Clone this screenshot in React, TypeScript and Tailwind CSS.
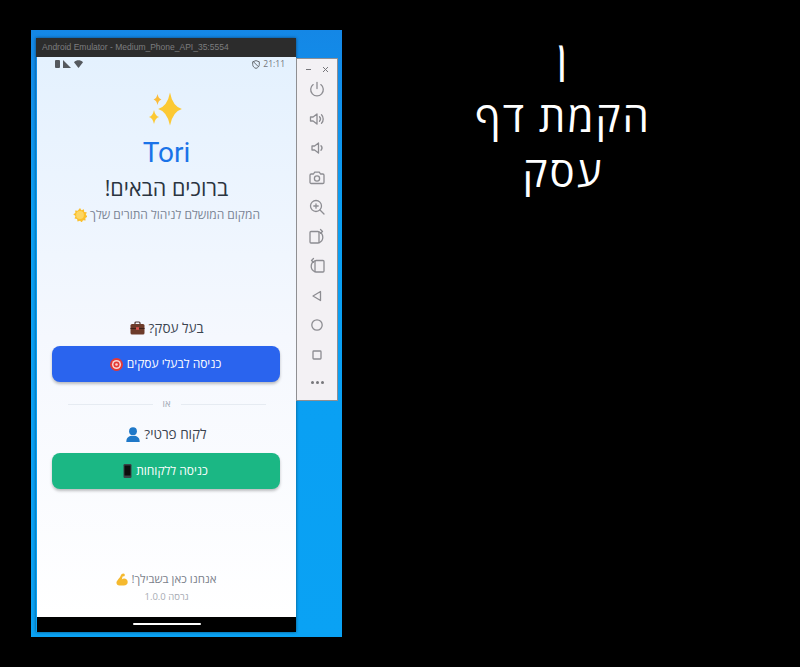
import React from "react";

const F = "font-['Open_Sans','Noto_Sans','Liberation_Sans',sans-serif]";

function Sparkles() {
  const s = (cx: number, cy: number, r: number) =>
    `M${cx} ${cy - r}Q${cx + r * 0.16} ${cy - r * 0.16} ${cx + r * 0.72} ${cy}Q${cx + r * 0.16} ${cy + r * 0.16} ${cx} ${cy + r}Q${cx - r * 0.16} ${cy + r * 0.16} ${cx - r * 0.72} ${cy}Q${cx - r * 0.16} ${cy - r * 0.16} ${cx} ${cy - r}Z`;
  return (
    <svg width="36" height="34" viewBox="0 0 36 34" className="-ml-[3px]">
      <path d={s(23, 17, 16.5)} fill="#fcc934" />
      <path d={s(10.5, 7.5, 5.5)} fill="#fbbc3a" />
      <path d={s(7, 25, 7)} fill="#fcc934" />
    </svg>
  );
}

function Sun() {
  return (
    <svg width="14" height="14" viewBox="0 0 13 13">
      <path d="M6.500 0l1.400 2 2.300-.8.2 2.400 2.400.4-.9 2.300 1.600 1.700-2 1.200.2 2.400-2.400-.2-1.200 2-1.600-1.600-2.300.8-.4-2.400-2.400-.5.9-2.200L.2 5.900l2-1.200-.2-2.400 2.400.2z" fill="#fbc02d" />
      <circle cx="6.500" cy="6.500" r="3.600" fill="#fdd663" />
    </svg>
  );
}

function Briefcase() {
  return (
    <svg width="15" height="14" viewBox="0 0 15 14">
      <rect x="5" y="1" width="5" height="3" rx="1" fill="none" stroke="#4e342e" strokeWidth="1.2" />
      <rect x="0.5" y="3" width="14" height="10.5" rx="1.5" fill="#6d3b2a" />
      <rect x="0.5" y="7" width="14" height="1" fill="#3e2018" />
      <rect x="6" y="6.2" width="3" height="2.6" fill="#d9534f" />
    </svg>
  );
}

function Target() {
  return (
    <svg width="13" height="13" viewBox="0 0 12 12">
      <circle cx="6" cy="6" r="6" fill="#e53935" />
      <circle cx="6" cy="6" r="4.2" fill="#f8d7d5" />
      <circle cx="6" cy="6" r="2.8" fill="#e53935" />
      <circle cx="6" cy="6" r="1.2" fill="#f8d7d5" />
    </svg>
  );
}

function Bust() {
  return (
    <svg width="14" height="15" viewBox="0 0 14 15">
      <circle cx="7" cy="4.2" r="3.9" fill="#1f78c8" />
      <path d="M0.300 15c0-4.500 2.600-6.200 6.700-6.200s6.700 1.700 6.700 6.200z" fill="#1f78c8" />
    </svg>
  );
}

function Mobile() {
  return (
    <svg width="9" height="14" viewBox="0 0 9 14">
      <rect x="0.5" y="0" width="8" height="14" rx="1.2" fill="#3a4347" />
      <rect x="1.5" y="1.5" width="6" height="10" fill="#0d0d0d" />
    </svg>
  );
}

function Muscle() {
  return (
    <svg width="12" height="13" viewBox="0 0 12 13">
      <path d="M7.500 0.500C5.800 0.800 5 1.600 4.600 3 3.700 4.800 1.600 7 .7 8.600c-.8 2 .4 3.900 2.800 3.900h4.200c2.600 0 4-1.500 4-3.500 0-2.200-1.600-3.600-3.500-3.600-1 0-1.800.4-2.400 1l.8-3 1.700-.2c.7-.2.9-2.400-.8-2.700z" fill="#f5b92e" />
    </svg>
  );
}

function ToolIcon({ children }: { children: React.ReactNode }) {
  return (
    <svg width="18" height="18" viewBox="0 0 18 18" fill="none" stroke="#8d8d92" strokeWidth="1.3" strokeLinecap="round" strokeLinejoin="round">
      {children}
    </svg>
  );
}

const tools: React.ReactNode[] = [
  <><path d="M9 2.500v6" /><path d="M5.200 4.600a6.300 6.300 0 1 0 7.600 0" /></>,
  <><path d="M2.500 7v4h2.600L9 14V4L5.100 7z" /><path d="M11.500 6.800a3.200 3.200 0 0 1 0 4.400" /><path d="M13.500 4.800a6 6 0 0 1 0 8.400" /></>,
  <><path d="M4 7v4h2.600L10.500 14V4L6.600 7z" /><path d="M13 6.800a3.200 3.200 0 0 1 0 4.400" /></>,
  <><path d="M2 6.200c0-.7.500-1.200 1.200-1.200h2.300l1.200-1.800h4.600L12.500 5h2.300c.7 0 1.200.5 1.200 1.200v7.100c0 .7-.5 1.200-1.200 1.200H3.200C2.500 14.500 2 14 2 13.300z" /><circle cx="9" cy="9.500" r="2.600" /></>,
  <><circle cx="8" cy="8" r="5.500" /><path d="M12 12l4 4M8 5.800v4.400M5.800 8h4.400" /></>,
  <><rect x="2" y="3.500" width="9" height="11.500" rx="1" /><path d="M11 3.800c2.200.7 3.800 2.800 3.800 5.500 0 2.700-1.500 4.600-3.800 5.500M12.500 1.500l2 2-2 1.800" /></>,
  <><rect x="7" y="3.500" width="9" height="11.500" rx="1" /><path d="M7 3.800C4.800 4.500 3.200 6.600 3.200 9.300c0 2.700 1.500 4.600 3.800 5.500M5.500 1.500l-2 2 2 1.800" /></>,
  <path d="M12.500 4.500v9L5 9z" />,
  <circle cx="9" cy="9" r="5.200" />,
  <rect x="5" y="5" width="8" height="8" rx="0.800" />,
];

export default function App() {
  return (
    <div className={`${F} relative w-[800px] h-[667px] overflow-hidden bg-black`}>
      {/* Desktop wallpaper */}
      <div className="absolute left-[31px] top-[30px] w-[311px] h-[607px] bg-gradient-to-b from-[#1487e6] via-[#0a9ef2] via-30% to-[#0aa2f4]">
        {/* Emulator window */}
        <div className="absolute left-[5px] top-[8px] w-[260px] h-[594px] flex flex-col shadow-[0_0_3px_rgba(0,0,0,0.5)]">
          <div className="h-[19px] shrink-0 bg-[#2c2c2c] flex items-center pl-[6px] text-[8.500px] font-['Liberation_Sans',sans-serif] text-[#7c7d7f]">
            Android Emulator - Medium_Phone_API_35:5554
          </div>
          <div className="h-[560px] shrink-0 ml-[1px] bg-gradient-to-b from-[#e4f1fe] via-[#f5f8fe] via-50% to-white flex flex-col items-center relative">
            <div className="h-[14px] w-full shrink-0 flex items-center justify-between pl-[18px] pr-[11px] text-[8.500px] text-[#72767b]">
              <div className="flex items-center gap-[3px]">
                <div className="w-[5px] h-[8px] bg-[#55595e] rounded-[1px]" />
                <svg width="8" height="8" viewBox="0 0 8 8"><path d="M0 8V0l8 8z" fill="#55595e" /></svg>
                <svg width="9" height="8" viewBox="0 0 9 8"><path d="M0 2.200C2.600-.4 6.400-.4 9 2.200L4.500 8z" fill="#55595e" /></svg>
              </div>
              <div className="flex items-center gap-[3px]">
                <svg width="8" height="9" viewBox="0 0 8 9" fill="none" stroke="#666a6f" strokeWidth="1"><path d="M4 .6l3.300 1.200v2.600c0 2-1.300 3.300-3.300 4-2-.7-3.300-2-3.300-4V1.800zM1.500 1.800l5 5" /></svg>
                <span>21:11</span>
              </div>
            </div>
            <div className="mt-[21px] h-[34px] flex items-center justify-center"><Sparkles /></div>
            <div className="mt-[10px] text-[28px] leading-[34px] text-[#1a73e8] font-['Roboto',sans-serif]">Tori</div>
            <div dir="rtl" className="mt-[3px] text-[21.500px] leading-[30px] text-[#2b3440]">ברוכים הבאים!</div>
            <div dir="rtl" className="mt-[2px] text-[12px] leading-[20px] text-[#7a8494] flex items-center gap-[3px]">
              <span>המקום המושלם לניהול התורים שלך</span><Sun />
            </div>

            <div dir="rtl" className="mt-[93px] text-[13.500px] leading-[20px] text-[#3b4450] flex items-center gap-[4px]">
              <span>בעל עסק?</span><Briefcase />
            </div>
            <button dir="rtl" className="mt-[8px] w-[228px] h-[36px] -translate-x-px rounded-[8px] bg-[#2a64ee] text-white text-[12px] flex items-center justify-center gap-[4px] shadow-[0_2px_3px_rgba(0,0,0,0.25)]">
              <span>כניסה לבעלי עסקים</span><Target />
            </button>
            <div dir="rtl" className="mt-[16px] w-[198px] flex items-center gap-[10px] text-[9.500px] leading-[12px] text-[#a0a7b3]">
              <div className="flex-1 h-px bg-[#e6ebf2]" />
              <span>או</span>
              <div className="flex-1 h-px bg-[#e6ebf2]" />
            </div>
            <div dir="rtl" className="mt-[14px] text-[13.500px] leading-[20px] text-[#3b4450] flex items-center gap-[4px]">
              <span>לקוח פרטי?</span><Bust />
            </div>
            <button dir="rtl" className="mt-[9px] w-[228px] h-[36px] -translate-x-px rounded-[8px] bg-[#1bb784] text-white text-[12px] flex items-center justify-center gap-[4px] shadow-[0_2px_3px_rgba(0,0,0,0.25)]">
              <span>כניסה ללקוחות</span><Mobile />
            </button>

            <div dir="rtl" className="mt-[81px] text-[11.500px] leading-[18px] text-[#7a808a] flex items-center gap-[3px]">
              <span>אנחנו כאן בשבילך!</span><Muscle />
            </div>
            <div dir="rtl" className="mt-[2px] text-[9.500px] leading-[14px] text-[#a7abb3]">גרסה 1.0.0</div>
          </div>
          <div className="flex-1 bg-black flex items-center justify-center ml-[1px] pb-[1px]">
            <div className="w-[68px] h-[2px] rounded-full bg-white" />
          </div>
        </div>

        {/* Emulator side toolbar */}
        <div className="absolute left-[265px] top-[28px] w-[42px] h-[343px] bg-[#f3f1f4] border border-[#8f8f92] flex flex-col items-center">
          <div className="w-full h-[20px] flex items-center justify-between px-[8px] text-[#77777b] shrink-0">
            <svg width="7" height="7" viewBox="0 0 7 7" stroke="currentColor"><path d="M1 3.500h5" /></svg>
            <svg width="7" height="7" viewBox="0 0 7 7" stroke="currentColor"><path d="M1 1l5 5M6 1L1 6" /></svg>
          </div>
          <div className="flex flex-col items-center gap-[11.500px] mt-[1px]">
            {tools.map((t, i) => (
              <ToolIcon key={i}>{t}</ToolIcon>
            ))}
          </div>
          <div className="mt-[17px] flex gap-[2px]">
            <div className="w-[3px] h-[3px] rounded-full bg-[#77777b]" />
            <div className="w-[3px] h-[3px] rounded-full bg-[#77777b]" />
            <div className="w-[3px] h-[3px] rounded-full bg-[#77777b]" />
          </div>
        </div>
      </div>

      {/* Slide caption */}
      <div dir="rtl" className="absolute left-[440px] top-[33px] w-[246px] text-center text-white text-[42px] leading-[55px] tracking-[2px]">
        <div className="-mt-[5px] pb-[5px]">ן</div>
        <div>הקמת דף</div>
        <div>עסק</div>
      </div>
    </div>
  );
}
